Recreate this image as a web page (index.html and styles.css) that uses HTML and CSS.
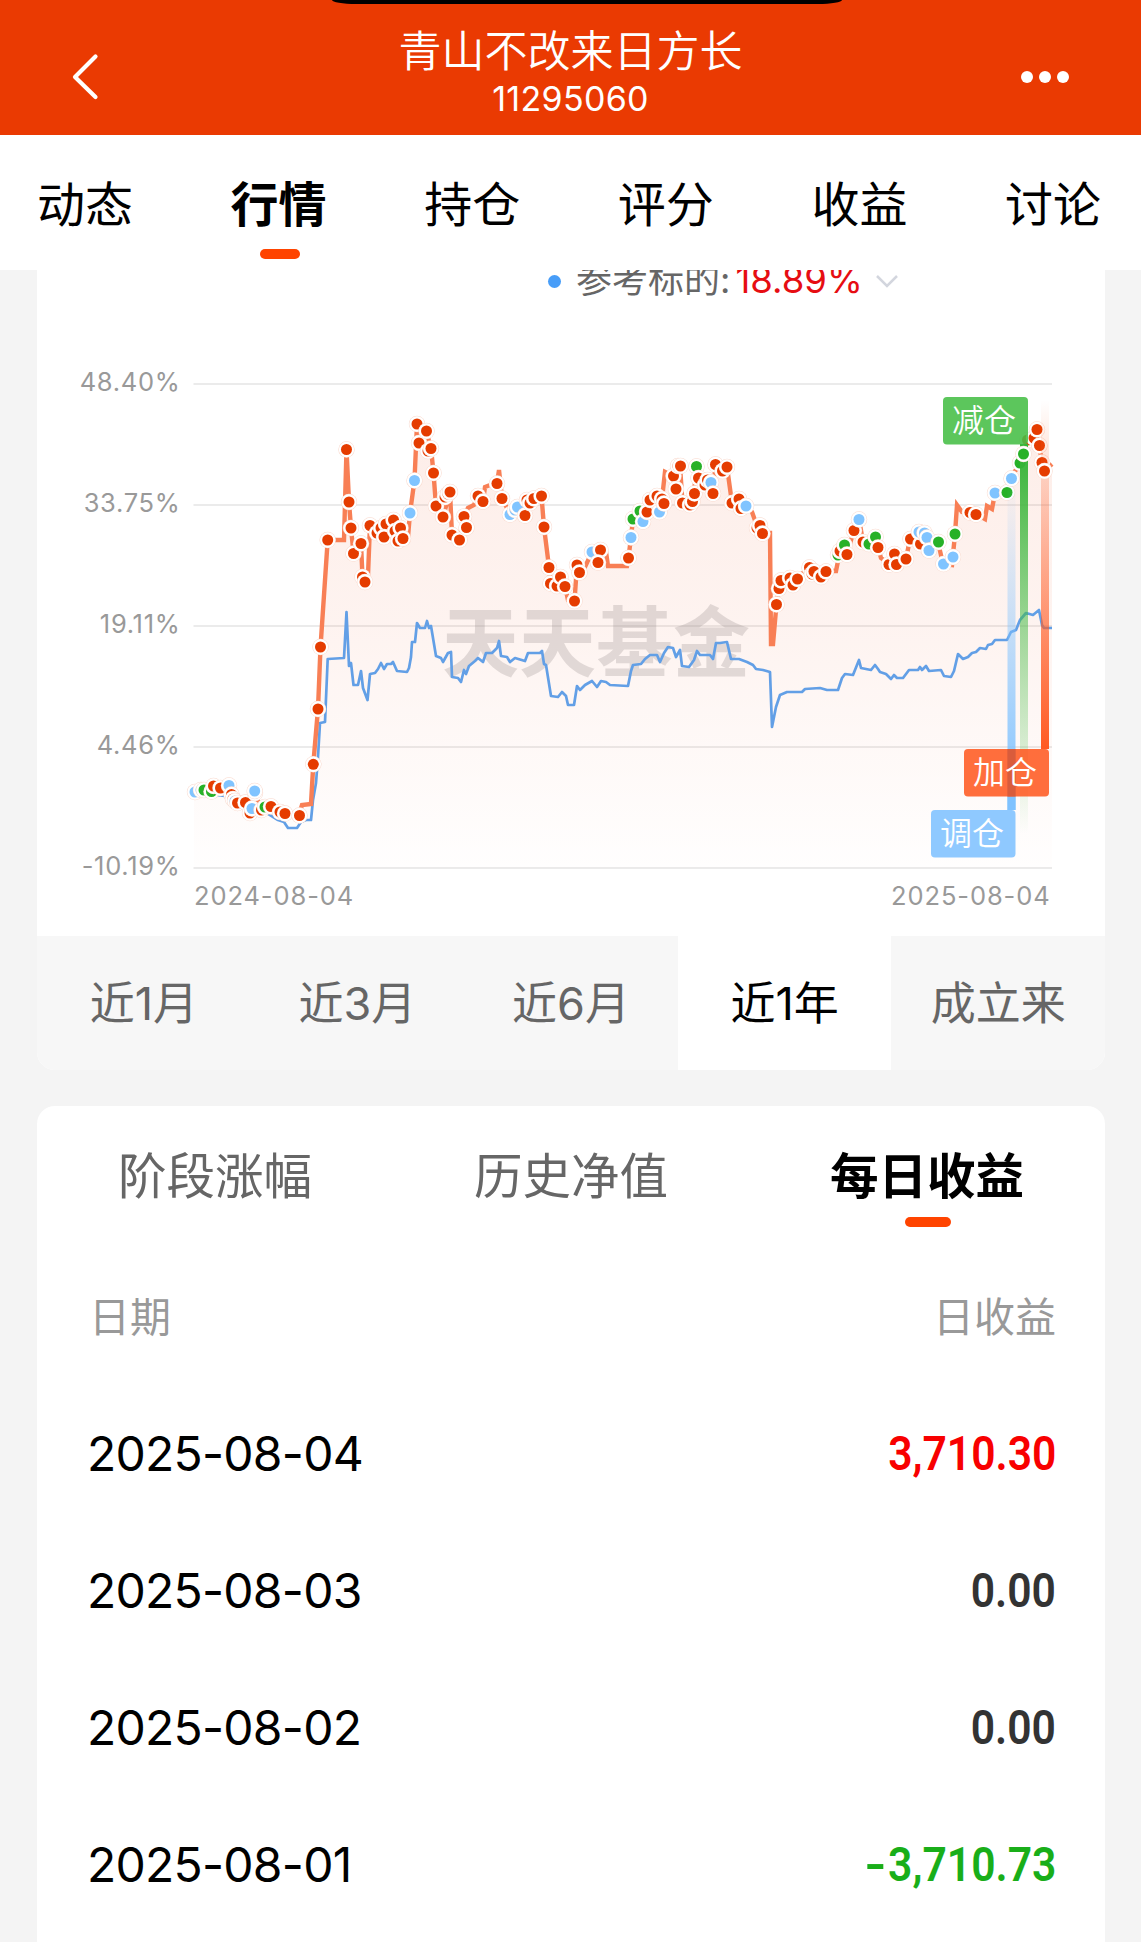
FILE: index.html
```
<!DOCTYPE html>
<html lang="zh-CN">
<head>
  <meta charset="UTF-8" />
  <meta name="viewport" content="width=device-width, initial-scale=1.0" />
  <title>青山不改来日方长</title>
  <link rel="stylesheet" href="styles.css">
</head>
<body>
  <header class="header">
    <div class="notch"></div>
    <svg class="back" viewBox="0 0 28 50" fill="none" stroke="#fff" stroke-width="4.2" stroke-linecap="round" stroke-linejoin="round">
      <path d="M23.500 4.500L3 25L23.500 45" />
    </svg>
    <div class="title">
      <h1>青山不改来日方长</h1>
      <span>11295060</span>
    </div>
    <div class="more"><i></i><i></i><i></i></div>
  </header>

  <nav class="tabs">
    <a>动态</a>
    <a class="active">行情</a>
    <a>持仓</a>
    <a>评分</a>
    <a>收益</a>
    <a>讨论</a>
  </nav>

  <main>
    <section class="card chart-card">
      <div class="legend">
        <i class="dot"></i>
        <span class="legend-name">参考标的:</span>
        <span class="legend-value">18.89%</span>
        <svg class="arrow" viewBox="0 0 24 16" fill="none" stroke="#d3d6de" stroke-width="2.5">
          <path d="M2 3L12 13L22 3" />
        </svg>
      </div>

      <svg id="chart" class="chart" viewBox="37 330 1068 606">
        <defs>
          <linearGradient id="areaFill" x1="0" y1="424" x2="0" y2="868" gradientUnits="userSpaceOnUse">
            <stop offset="0" stop-color="#ea3a02" stop-opacity="0.09" />
            <stop offset="0.45" stop-color="#ea3a02" stop-opacity="0.06" />
            <stop offset="1" stop-color="#ea3a02" stop-opacity="0.005" />
          </linearGradient>
          <linearGradient id="greenBar" x1="0" y1="0" x2="0" y2="1">
            <stop offset="0" stop-color="#34b334" />
            <stop offset="1" stop-color="#59c559" stop-opacity="0" />
          </linearGradient>
          <linearGradient id="orangeBar" x1="0" y1="0" x2="0" y2="1">
            <stop offset="0" stop-color="#ff5a22" stop-opacity="0" />
            <stop offset="1" stop-color="#ff5a22" />
          </linearGradient>
          <linearGradient id="blueBar" x1="0" y1="0" x2="0" y2="1">
            <stop offset="0" stop-color="#7fc2ff" stop-opacity="0" />
            <stop offset="1" stop-color="#7fc2ff" />
          </linearGradient>
        </defs>

        <g class="grid">
          <path d="M193.500 384H1052M193.500 505H1052M193.500 626H1052M193.500 747H1052M193.500 868H1052" />
        </g>
        <g class="axis axis-y">
          <text x="180.500" y="390.500">48.40%</text>
          <text x="180.500" y="511.500">33.75%</text>
          <text x="180.500" y="632.500">19.11%</text>
          <text x="180.500" y="753.500">4.46%</text>
          <text x="180.500" y="874.500">-10.19%</text>
        </g>
        <g class="axis">
          <text x="194" y="904.500">2024-08-04</text>
          <text x="891" y="904.500">2025-08-04</text>
        </g>

        <polygon id="area" fill="url(#areaFill)" />
        <text class="watermark" x="442" y="671">天天基金</text>
        <polyline id="indexLine" />
        <polyline id="fundLine" />
        <g id="dots"></g>

        <rect x="1007.500" y="480" width="8" height="330" fill="url(#blueBar)" />
        <rect x="1020" y="444" width="8" height="390" fill="url(#greenBar)" />
        <rect x="1041" y="400" width="8" height="349" fill="url(#orangeBar)" />
        <g id="dotsTop"></g>

        <g class="tag">
          <rect x="943" y="397" width="85" height="47.500" rx="4" fill="#45be45" />
          <text x="952" y="432">减仓</text>
          <rect x="931" y="810" width="84.500" height="47.500" rx="4" fill="#7fc2ff" />
          <text x="940" y="845">调仓</text>
          <path d="M1007.500 749h8v61h-8z" fill="#7fc2ff" />
          <rect x="964" y="749" width="85" height="47.500" rx="4" fill="#ff5a22" />
          <path class="tag-shade" d="M1007.500 749h8v47.500h-8z" />
          <text x="973" y="784">加仓</text>
        </g>
      </svg>

      <div class="periods">
        <a>近1月</a>
        <a>近3月</a>
        <a>近6月</a>
        <a class="active">近1年</a>
        <a>成立来</a>
      </div>
    </section>

    <section class="card list-card">
      <div class="sub-tabs">
        <a>阶段涨幅</a>
        <a>历史净值</a>
        <a class="active">每日收益</a>
      </div>
      <div class="row row-head"><span>日期</span><span>日收益</span></div>
      <div class="row"><span>2025-08-04</span><b class="up">3,710.30</b></div>
      <div class="row"><span>2025-08-03</span><b>0.00</b></div>
      <div class="row"><span>2025-08-02</span><b>0.00</b></div>
      <div class="row"><span>2025-08-01</span><b class="down"><i class="minus">-</i>3,710.73</b></div>
    </section>
  </main>

  <script src="script.js"></script>
</body>
</html>
```

FILE: styles.css
```
* {
  box-sizing: border-box;
}
body {
  margin: 0;
  height: 1942px;
  overflow: hidden;
  background: #f4f4f4;
  font-family: Inter, "Noto Sans CJK SC", sans-serif;
  color: #000;
}

/* 顶部 */
.header {
  position: relative;
  display: flex;
  justify-content: space-between;
  height: 135px;
  padding: 0 72px;
  background: #ea3a02;
  color: #fff;
}
.notch {
  position: absolute;
  top: 0;
  left: 332px;
  width: 510px;
  height: 4px;
  background: #000;
  border-radius: 0 0 24px 24px / 0 0 4px 4px;
}
.back {
  width: 28px;
  height: 50px;
  margin: 52px 20px 0 0;
}
.title {
  display: flex;
  flex-direction: column;
  align-items: center;
  padding-top: 25px;
}
.title h1 {
  margin: 0;
  font-size: 43px;
  font-weight: 350;
  line-height: 52px;
}
.title span {
  font-size: 34px;
  line-height: 44px;
  letter-spacing: 0.3px;
}
.more {
  display: flex;
  gap: 6px;
  margin-top: 71px;
}
.more i {
  width: 12px;
  height: 12px;
  border-radius: 50%;
  background: #fff;
}

.tabs {
  display: flex;
  justify-content: space-between;
  height: 135px;
  padding: 0 40px 0 37px;
  background: #fff;
  font-size: 48px;
  line-height: 139px;
}
.active {
  position: relative;
  color: #000;
}
.tabs .active,
.sub-tabs .active {
  font-weight: 700;
}
.tabs .active::after,
.sub-tabs .active::after {
  content: "";
  position: absolute;
  left: 50%;
  top: 114px;
  width: 40px;
  height: 10px;
  margin-left: -19px;
  border-radius: 5px;
  background: #ff4400;
}

main {
  padding: 0 36px 0 37px;
}
.card {
  background: #fff;
  border-radius: 18px;
  overflow: hidden;
}
.chart-card {
  border-radius: 0 0 18px 18px;
  margin-bottom: 36px;
}
.list-card {
  padding-bottom: 40px;
}

/* 图例 */
.legend {
  display: flex;
  align-items: center;
  height: 80px;
  margin-top: -20px;
  padding: 0 0 18px 511px;
  clip-path: inset(20px 0 0 0);
  font-size: 36px;
  line-height: 52px;
}
.dot {
  width: 13px;
  height: 13px;
  margin-right: 15px;
  border-radius: 50%;
  background: #479df8;
}
.legend-name {
  margin-top: -3px;
  color: #666;
}
.legend-value {
  margin: -3px 0 0 5px;
  font-size: 36.5px;
  color: #e60d12;
}
.arrow {
  width: 24px;
  height: 16px;
  margin-left: 12px;
}

/* 走势图 */
.chart {
  display: block;
  width: 1068px;
  height: 606px;
}
.grid path {
  stroke: #ebebeb;
  stroke-width: 2;
}
.axis text {
  font-size: 25.5px;
  letter-spacing: 0.9px;
  fill: #999;
}
.axis-y text {
  text-anchor: end;
  letter-spacing: 0.7px;
}
.watermark {
  font-size: 77px;
  font-weight: 700;
  fill: #8a7f7f;
  opacity: 0.24;
}
#fundLine {
  fill: none;
  stroke: #f87f55;
  stroke-width: 4.4;
}
#indexLine {
  fill: none;
  stroke: #629fe6;
  stroke-width: 2.7;
  stroke-linejoin: round;
}
.tag rect {
  opacity: 0.88;
}
.tag text {
  font-size: 32px;
  font-weight: 350;
  fill: #fff;
}
.tag-shade {
  fill: #d95c3c;
}

.periods {
  display: flex;
  height: 134px;
  background: #f7f7f7;
}
.periods a {
  flex: 1;
  color: #666;
  font-size: 45px;
  line-height: 136px;
  text-align: center;
}
.periods .active {
  background: #fff;
  color: #000;
}

/* 每日收益 */
.sub-tabs {
  display: flex;
  justify-content: space-around;
  height: 142px;
  color: #666;
  font-size: 48.5px;
  line-height: 142px;
}
.sub-tabs .active::after {
  top: 111px;
  width: 46px;
  margin-left: -22px;
}
.row {
  display: flex;
  justify-content: space-between;
  align-items: center;
  height: 137px;
  padding: 0 49px 0 50px;
  font-size: 48px;
  letter-spacing: -0.75px;
}
.row-head {
  padding: 0 49px 5px 52px;
  color: #999;
  font-size: 41px;
  letter-spacing: 0;
}
.row b {
  color: #333;
  font-family: Roboto, sans-serif;
  font-weight: 600;
  font-size: 49px;
  letter-spacing: 0;
  transform: scaleX(0.87);
  transform-origin: right;
}
.row .up {
  color: #f80000;
}
.row .down {
  color: #19ae19;
}
.minus {
  display: inline-block;
  margin-right: 2px;
  font-style: normal;
  transform: scaleX(1.4);
  transform-origin: right;
}
```

FILE: script.js
```
const svgNS = 'http://www.w3.org/2000/svg';
const colors = { r: '#e53c00', g: '#27b127', b: '#80c4ff' };

// 组合收益
const fund = '194,792 204,790 213,787 220,788 229,786 232,796 237,803 245,803 250,812 255,793 261,810 271,807 280,812 285,813 299,815 302,805 311,804 313.3,764 318,709 320.5,647 327.7,540 344,540 346.5,449 349,502 351,528 353.5,553 361,543.5 362.5,577 365,582 368,575 370,525 377,533 386,524 393,520 398,541 403,538 408,537 410,513 414.5,480 417,424 419,443 426,431 431,448 433.5,473 436,506 443,517 450,492 452,535 459,540 464,516 468,508 474,505 478,496 483,501 485,487 490,485 497,483 499,470 502,498 510,514 517,507 525,515 527,500 534,498 541.5,496 544,527 549,567 550.5,583 557,586 560,577 565,586 568,600 574.5,601 577,565 585,567 592,552 598,562 600,550 606,552 608,566 627,566 628.5,558 631,537 633,519 640,511 647,512 650,500 662,499 665,472 673,476 676,489 680,466 682.5,503 690,505 694,493 696.5,466 698.5,478 705,485 711,482 713,493 715.5,464 722,471 727,467 732,503 739,499 741,508 746,506 752,512 757,526 762,533 770,533 771,644 773,644 776.5,604 779,588 781,580 790,578 793,585 797,579 809,567 814,571 821,577 826,571 836,571 840,551 847,554 854,530 859,519 863,542 875,537 878,547 881,558 889,564 894,554 896,564 906,559 910,539 920,544 927,537 929,550 938,542 943,564 952,565 955,534 957,505 962,512 976,514 985,519 987,506 992,509 995,493 1007,492 1011,478 1020,463 1023,454 1027,440 1034,438 1037,429 1039,445 1042,462 1044,471 1052,464';

// 参考标的
const index = '194,792 217,795 232,797 262,810 278,820 284,822 288,828 297,828 301,822 306,820 311,820 313,800 316,783 318,757 320,723 325,722 327.7,659 344,658 346.5,612 349,666 351,663 353.5,685 358,685 361,671 363,688 367.500,700 370,674 375,673 378,669 381,663 384,669 387,664 391,664 393,662 397,671 407,672 409,668 411,657 412,642 415,642 417,623 420,628 425,628 427,621 429,628 431,626 436,656 441,658 443,662 448,653 451,652 452,677 458,678 461,682 464,670 466,674 469,666 475,661 478,658 483,662 486,653 492,653 497,648 499,641 501,656 507,657 510,662 515,658 525,661 528,653 540,653 542,651 544,664 546,665 551,696 558,697 562,692 566,696 568,705 574,705 577,686 580,690 585,685 592,681 597,687 601,681 606,682 610,685 628,686 631,671 633,665 641,664 645,659 650,655 657,655 660,662 664,653 668,647 673,648 676,657 680,650 682,666 689,667 694,660 697,651 700,655 710,655 713,659 716,643 720,643 727,642 731,659 739,659 747,662 753,665 756,669 763,670 770,672 772,727 776,707 780,695 787,692 802,692 805,689 820,688 827,690 838,690 842,678 845,674 853,675 859,660 861,668 871,670 875,665 878,669 880,672 886,674 891,679 894,675 897,678 903,678 909,670 918,670 920,667 922,670 926,666 929,671 941,670 944,676 951,677 954,671 958,654 963,659 968,657 972,653 976,652 980,648 986,649 988,645 992,644 995,640 1007,640 1011,632 1016,630 1020,620 1026,613 1033,615 1039,610 1042,625 1044,628 1052,628';

// 调仓记录: r 加仓, g 减仓, b 调仓
const trades = 'b195,792 b201,790 g204,790 g211.5,791.5 r213.5,786 r220.5,788 b229,785.5 r231.5,794.5 r233,799 b235,801 r237.5,803 r245.5,802.5 r250,813 b252,808.5 r255,793 b254.7,791 r261.5,810 g265,807 r271,806.5 r280,812 r285,813.5 r299.5,815.5 r313.3,764.3 r318,709 r320.5,647 r327.7,540 r346.5,449.5 r349,502 r351,528 r353.5,553.5 r361,543.5 r362.5,577 r365,582 r370,525.5 r377,533 r381,528 r386,524 r384,537 r393.5,520 r395,531 r398,541 r400.5,528 r403,538.5 b410,513 b414.5,480.5 r417,424 r419,443 r426.5,431 r428,451 r431,448.5 r433.5,473 r436,506 r443,517 r445,497 r448,494 r450,492 r452,535 r459.5,540 r464,516.5 r466.5,527.5 r478,496 r483,501.5 r497,483.5 r502,498.5 b510,514.5 b515,510 b517.5,507 r525,515.5 r527,500 r530,503 r534,498.5 r541.5,496 r544,527 r549,567.5 r550.5,583.5 r557,586 r560.5,577 r565,586.5 r574.5,601 r577,565 r579.5,572.5 b592,552 r600.5,550 r598,562.5 r628.5,558 b631,537.5 g633,519 g640,511 b643,521.5 r647,512 r650,500 r657,496 b659.5,512 r662,499 r664,503.5 r673.5,476 r676,489 r678,466 r680.5,466 r682.5,503 r690,505 r692.5,501.5 r694.5,493.5 g696.5,466.5 r698.5,478 r705,485 r707.5,480 b711,482.5 r713,493.5 r715.5,464.5 r722.5,471 r727,467 r732,503 r739,499 r741,508.5 b746,506 r757,528 r760,525.5 r762.5,533.5 r776.5,604.5 r779,588.5 r781,580.5 r790,578 r793,585 r797.5,579 r809.5,567.5 r812,574 r814,571.5 r821,577 r826,571.5 g838,555 r840,551 g844.5,545 r847,554.5 r854,530.5 b859,519.5 r863,542 g869,544 g875.5,537 r878,547.5 r889,564.5 r894.5,554 r896.5,564.5 r906,559 r910.5,539 r920.5,544 b919,532 b924.5,533 b927,537.5 b929,550.5 g938.5,542 b943.5,564 b953,557 g955,534 r970,512.5 r976,514.5 b995,493 g1007,492.5 b1011.5,478.5 g1020,463 r1027.5,440 r1034,438 r1037,429.5 r1039.5,445.5 r1042,462.5';
const latest = 'g1023.5,454 r1044.5,471';

function drawDots(id, list) {
  const group = document.getElementById(id);
  list.split(' ').forEach((item) => {
    const [x, y] = item.slice(1).split(',');
    [[8.2, '#f9d9cd'], [7.7, '#fff'], [5.5, colors[item[0]]]].forEach(([r, fill]) => {
      const c = document.createElementNS(svgNS, 'circle');
      c.setAttribute('cx', x);
      c.setAttribute('cy', y);
      c.setAttribute('r', r);
      c.setAttribute('fill', fill);
      group.appendChild(c);
    });
  });
}

document.getElementById('fundLine').setAttribute('points', fund);
document.getElementById('indexLine').setAttribute('points', index);
document.getElementById('area').setAttribute('points', fund + ' 1052,868 194,868');
drawDots('dots', trades);
drawDots('dotsTop', latest);
```
